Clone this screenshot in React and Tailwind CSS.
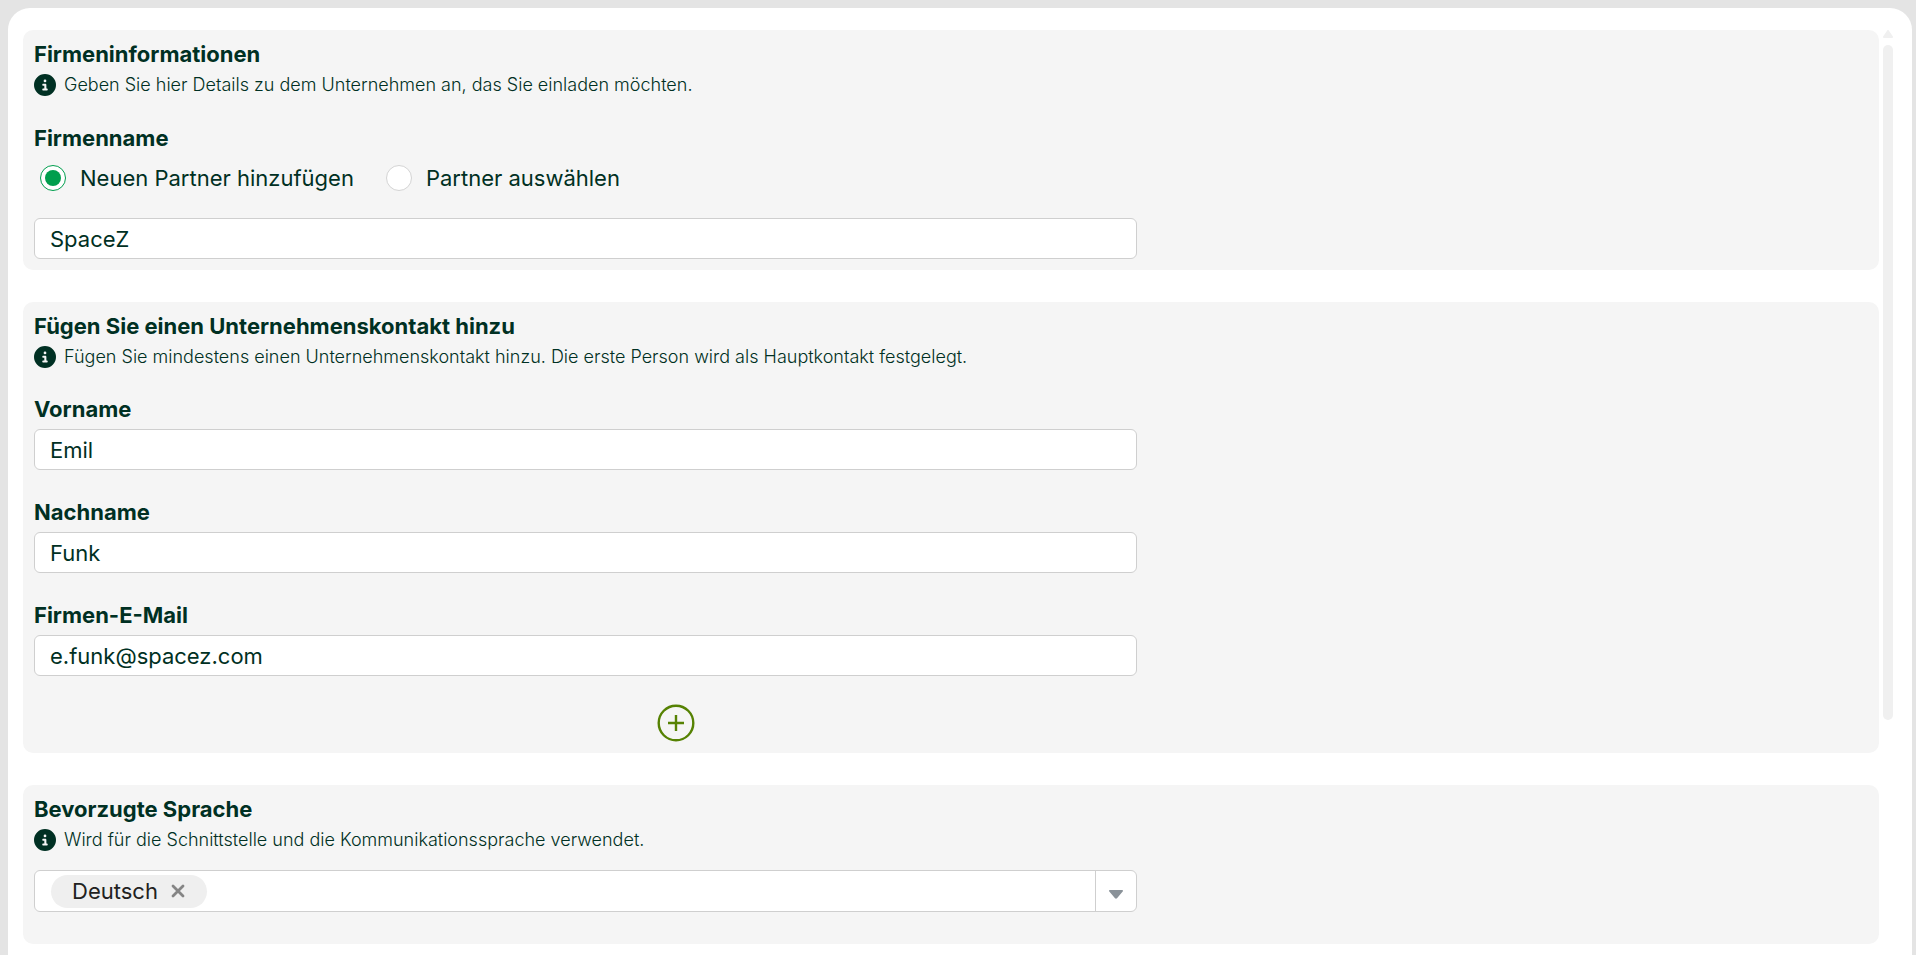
import { useState } from 'react';
import { FaCircleInfo } from 'react-icons/fa6';

const contactFields = [
    { id: 'firstName', label: 'Vorname', type: 'text' },
    { id: 'lastName', label: 'Nachname', type: 'text' },
    { id: 'email', label: 'Firmen-E-Mail', type: 'email' },
];

const inputClass = "block w-full h-[41px] px-[15px] rounded-md border border-[#cfcfcf] bg-white text-[22px] leading-7 outline-none focus:border-[#009e4d]";

function Section({ title, titleId, hint, className, children }) {
    return (
        <section className={`rounded-[10px] bg-[#f5f5f5] pt-2.5 ${className}`}>
            <div className="px-[11px]">
                <h2 id={titleId} className="text-[22px] leading-7 font-bold">{title}</h2>
                <p className="mt-1.5 flex items-center gap-2 text-[18px] leading-[22px] font-[350]">
                    <FaCircleInfo className="size-[22px] shrink-0" />
                    {hint}
                </p>
            </div>
            {children}
        </section>
    );
}

function Radio({ label, value, checked, onChange }) {
    return (
        <label className="flex items-center gap-3.5 text-[22px] leading-[26px] cursor-pointer">
            <input
                type="radio"
                name="partnerMode"
                value={value}
                checked={checked}
                onChange={() => onChange(value)}
                className="appearance-none size-[26px] shrink-0 rounded-full border border-[#d4d4d4] bg-white grid place-content-center checked:border-[#009e4d] before:size-4 before:rounded-full checked:before:bg-[#009e4d]"
            />
            {label}
        </label>
    );
}

function LanguageSelect({ languages, setLanguages }) {
    const all = ['Deutsch', 'English', 'Français', 'Italiano'];
    const open = all.filter((l) => !languages.includes(l));

    return (
        <div className="flex items-center h-[42px] pl-4 rounded-md border border-[#cfcfcf] bg-white">
            {languages.map((lang) => (
                <span key={lang} className="mr-2 flex items-center h-[33px] pl-[21px] pr-[22px] gap-[13px] rounded-full bg-[#efefef] text-[22px] leading-7 text-[#212121]">
                    {lang}
                    <button type="button" aria-label={`${lang} entfernen`} onClick={() => setLanguages(languages.filter((l) => l !== lang))}>
                        <svg viewBox="0 0 14 14" className="size-[14px]" fill="none" stroke="#858585" strokeWidth="2.8" strokeLinecap="round">
                            <path d="M2 2l10 10M12 2L2 12" />
                        </svg>
                    </button>
                </span>
            ))}
            <div className="relative flex-1 h-full">
                <select
                    aria-labelledby="language-title"
                    value=""
                    onChange={(e) => setLanguages([...languages, e.target.value])}
                    className="block appearance-none w-full h-full outline-none"
                >
                    <option value="" hidden></option>
                    {open.map((l) => <option key={l} value={l}>{l}</option>)}
                </select>
                <span className="absolute inset-y-0 right-0 w-[41px] flex items-center justify-center pt-1.5 border-l border-[#cfcfcf] pointer-events-none">
                    <svg viewBox="0 0 14 9" className="w-[14px] h-[9px]" fill="#8a9299">
                        <path d="M1 0h12c.9 0 1.300 1 .7 1.600L8 8.200c-.6.600-1.400.6-2 0L.3 1.600C-.3 1 .1 0 1 0z" />
                    </svg>
                </span>
            </div>
        </div>
    );
}

export default function App() {
    const [mode, setMode] = useState('new');
    const [company, setCompany] = useState('SpaceZ');
    const [contact, setContact] = useState({ firstName: 'Emil', lastName: 'Funk', email: 'e.funk@spacez.com' });
    const [languages, setLanguages] = useState(['Deutsch']);

    return (
        <div className="min-h-screen flex flex-col bg-[#e4e4e4] pt-2 pl-2 pr-1 font-['Inter',sans-serif] text-[#003023]">
            <main className="flex-1 flex gap-1 rounded-t-[22px] bg-white pt-[22px] pl-[15px] pr-[19px]">
                <form className="flex-1 flex flex-col gap-8" onSubmit={(e) => e.preventDefault()}>
                    <Section title="Firmeninformationen" hint="Geben Sie hier Details zu dem Unternehmen an, das Sie einladen möchten." className="pb-[11px]">
                        <div className="w-3/5 pl-[11px] mt-7">
                            <label htmlFor="company" id="company-label" className="block text-[22px] leading-7 font-bold">Firmenname</label>
                            <div role="radiogroup" aria-labelledby="company-label" className="mt-[13px] pl-1.5 flex gap-8">
                                <Radio label="Neuen Partner hinzufügen" value="new" checked={mode === 'new'} onChange={setMode} />
                                <Radio label="Partner auswählen" value="existing" checked={mode === 'existing'} onChange={setMode} />
                            </div>
                            <div className="mt-[27px]">
                                <input id="company" type="text" value={company} onChange={(e) => setCompany(e.target.value)} className={inputClass} />
                            </div>
                        </div>
                    </Section>

                    <Section title="Fügen Sie einen Unternehmenskontakt hinzu" hint="Fügen Sie mindestens einen Unternehmenskontakt hinzu. Die erste Person wird als Hauptkontakt festgelegt." className="pb-[11px]">
                        <div className="w-3/5 pl-[11px] mt-[27px] flex flex-col gap-7">
                            {contactFields.map((field) => (
                                <div key={field.id}>
                                    <label htmlFor={field.id} className="block mb-1.5 text-[22px] leading-7 font-bold">{field.label}</label>
                                    <input
                                        id={field.id}
                                        type={field.type}
                                        value={contact[field.id]}
                                        onChange={(e) => setContact({ ...contact, [field.id]: e.target.value })}
                                        className={inputClass}
                                    />
                                </div>
                            ))}
                        </div>
                        <div className="px-[11px] mt-7">
                            <div className="w-[70%] flex justify-center">
                                <button type="button" aria-label="Kontakt hinzufügen">
                                    <svg viewBox="0 0 38 38" className="size-[38px]" fill="none" stroke="#568203" strokeWidth="2.4">
                                        <circle cx="19" cy="19" r="17.300" />
                                        <path d="M19 11v16M11 19h16" />
                                    </svg>
                                </button>
                            </div>
                        </div>
                    </Section>

                    <Section title="Bevorzugte Sprache" titleId="language-title" hint="Wird für die Schnittstelle und die Kommunikationssprache verwendet." className="pb-8">
                        <div className="w-3/5 pl-[11px] mt-[19px]">
                            <LanguageSelect languages={languages} setLanguages={setLanguages} />
                        </div>
                    </Section>
                </form>

                {/* scroll track */}
                <div className="w-2.5 flex flex-col gap-[7px]" aria-hidden="true">
                    <svg viewBox="0 0 10 8" className="w-2.5 h-2" fill="#f0f0f0">
                        <path d="M4.200.4c.4-.5 1.200-.5 1.600 0L9.900 6.500c.3.700 0 1.500-.8 1.500H.9C.1 8-.2 7.200.1 6.500z" />
                    </svg>
                    <div className="h-[73%] rounded-full bg-[#f0f0f0]" />
                </div>
            </main>
        </div>
    );
}
